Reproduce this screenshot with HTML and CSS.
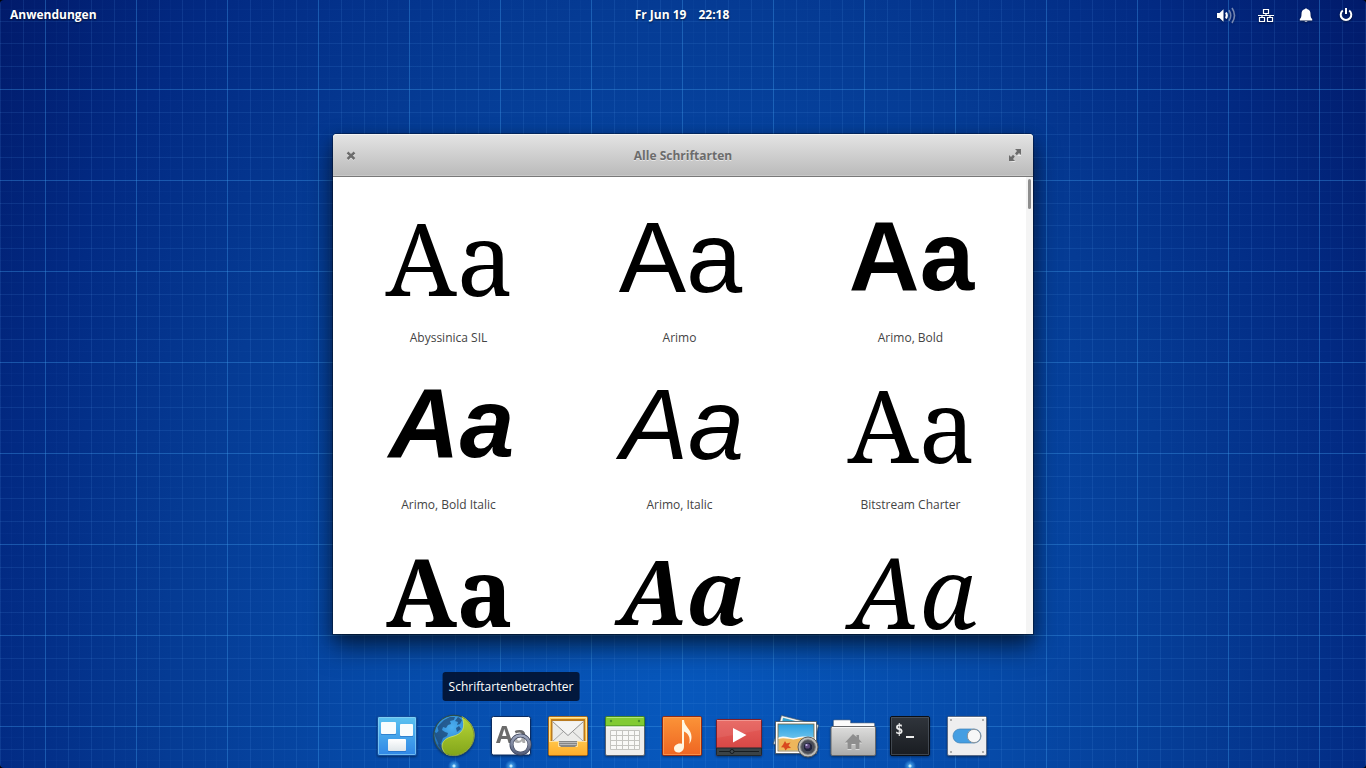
FILE: index.html
```html
<!DOCTYPE html>
<html lang="de">
<head>
<meta charset="utf-8">
<meta name="viewport" content="width=device-width, initial-scale=1">
<title>Alle Schriftarten</title>
<link rel="stylesheet" href="styles.css">
</head>
<body>
<div class="desktop">

  <header class="panel">
    <button class="panel-button apps">Anwendungen</button>
    <button class="panel-button clock"><span>Fr Jun 19</span><span>22:18</span></button>
    <div class="indicators">
      <button class="indicator" aria-label="Lautstärke">
        <svg width="20" height="18" viewBox="0 0 20 18" fill="none" stroke="#fff">
          <path d="M1 7h2.500l4-3.800v12.600L3.500 12H1z" fill="#fff" stroke="none"/>
          <path d="M10 6.500q1.800 3 0 6" stroke-width="2"/>
          <path d="M13 4.200q3.400 5.300 0 10.600M16 2q5 7.500 0 15" stroke-width="1.600" opacity=".45"/>
        </svg>
      </button>
      <button class="indicator" aria-label="Netzwerk">
        <svg width="16" height="16" viewBox="0 0 16 16" fill="none" stroke="#fff">
          <path d="M5.500 2.500h5v4h-5zM1.500 10.500h5v4h-5zM9.500 10.500h5v4h-5zM0 8.500h16M8 6.500v2M4 8.500v2M12 8.500v2" stroke-width="1.200"/>
        </svg>
      </button>
      <button class="indicator" aria-label="Benachrichtigungen">
        <svg width="16" height="16" viewBox="0 0 16 16" fill="#fff">
          <path d="M7 2q1-1.600 2 0c2.600.700 3.500 2.600 3.500 5 0 2.800.500 4.200 1.700 5v1.400H1.800V12c1.200-.800 1.700-2.200 1.700-5C3.500 4.600 4.400 2.700 7 2zM6.300 14h3.400q-1.700 1.600-3.400 0z"/>
        </svg>
      </button>
      <button class="indicator" aria-label="Ausschalten">
        <svg width="16" height="16" viewBox="0 0 16 16" fill="none" stroke="#fff" stroke-width="2">
          <path d="M4.800 3.500a5.300 5.300 0 1 0 6.400 0M8 1v6"/>
        </svg>
      </button>
    </div>
  </header>

  <main class="window">
    <div class="titlebar">
      <button class="title-button" aria-label="Schließen">
        <svg width="10" height="12" viewBox="0 0 10 12" stroke-width="2.400"><path d="M1.500 4.500l7 6M8.500 4.500l-7 6" stroke="#eee"/><path d="M1.500 3.500l7 6.500M8.500 3.500l-7 6.500" stroke="#6c6c6c"/></svg>
      </button>
      <h1 class="title">Alle Schriftarten</h1>
      <button class="title-button" aria-label="Maximieren">
        <svg width="14" height="16" viewBox="0 0 14 16">
          <path d="M1 15h7l-2-1zM9 9l2-1 2 1V8z" fill="#eee"/>
          <path d="M7 2h6v6l-2-2-2.200 2.200-1.800-1.800L9 4zM1 8l2 2 2-2.200 1.800 1.800L5 12l2 2H1z" fill="#6c6c6c"/>
        </svg>
      </button>
    </div>
    <div class="content">
      <ul class="fonts">
        <li class="font"><span class="sample serif">Aa</span><span class="name">Abyssinica SIL</span></li>
        <li class="font"><span class="sample sans">Aa</span><span class="name">Arimo</span></li>
        <li class="font"><span class="sample sans bold">Aa</span><span class="name">Arimo, Bold</span></li>
        <li class="font"><span class="sample sans bold italic">Aa</span><span class="name">Arimo, Bold Italic</span></li>
        <li class="font"><span class="sample sans italic">Aa</span><span class="name">Arimo, Italic</span></li>
        <li class="font"><span class="sample serif">Aa</span><span class="name">Bitstream Charter</span></li>
        <li class="font"><span class="sample serif bold">Aa</span></li>
        <li class="font"><span class="sample serif bold italic">Aa</span></li>
        <li class="font"><span class="sample serif italic">Aa</span></li>
      </ul>
      <div class="scrollbar"><div class="thumb"></div></div>
    </div>
  </main>

  <nav class="dock">
    <button class="launcher" aria-label="Multitasking-Ansicht">
      <svg viewBox="0 0 48 48">
        <defs>
          <linearGradient id="sky" x2="0" y2="1"><stop stop-color="#5cc3f0"/><stop offset="1" stop-color="#2f86e6"/></linearGradient>
          <linearGradient id="white" x2="0" y2="1"><stop stop-color="#fff"/><stop offset="1" stop-color="#dfe6ea"/></linearGradient>
        </defs>
        <rect x="4.500" y="4.500" width="39" height="39" rx="1.500" fill="url(#sky)" stroke="#124c9c"/>
        <rect x="5.500" y="5.500" width="37" height="37" rx="1" fill="none" stroke="#8bd3f6" opacity=".7"/>
        <g fill="#1c62b8" opacity=".5"><rect x="8" y="11" width="15" height="12"/><rect x="27" y="13" width="13" height="12"/><rect x="15" y="28" width="18" height="12"/></g>
        <g fill="#f8fcfd"><rect x="8" y="10" width="15" height="12" rx="1"/><rect x="27" y="12" width="13" height="12" rx="1"/><rect x="15" y="27" width="18" height="12" rx="1" fill="url(#white)"/></g>
      </svg>
    </button>
    <button class="launcher running" aria-label="Webbrowser">
      <svg viewBox="0 0 48 48">
        <defs>
          <radialGradient id="sea" cx=".45" cy=".3" r=".7"><stop stop-color="#4cb0f0"/><stop offset=".6" stop-color="#2d87d3"/><stop offset="1" stop-color="#174a89"/></radialGradient>
          <linearGradient id="leaf" x2="0" y2="1"><stop stop-color="#b8d636"/><stop offset="1" stop-color="#82a51b"/></linearGradient>
        </defs>
        <circle cx="24" cy="23.500" r="20.300" fill="url(#sea)" stroke="#2a4a63" stroke-width="1"/>
        <path d="M10 12l4-4 6-3 5 0-1 3-4 1 1 3-3 1-2 3-3-1-1 3 3 2 3 1-1 3-4 2-2 5-2 2-4-9-.500-4 2 1 2-2-1-4zM28 5l4 3-2 4-3 1 1-3-3-1zM26 16l3-2 2 3-4 3zM9 31l4 3v6l-5-7z" fill="#1b4272" opacity=".72"/>
        <path d="M32 4.800c14 6.600 16.500 24 4.500 34-5.500 4.800-13.500 6-20.500 3.300-7-7-4.500-15 6-17.500 11-2.500 14-9.600 10-19.800z" fill="url(#leaf)" stroke="#d3e560" stroke-width=".8"/>
        <circle cx="24" cy="23.500" r="20" fill="none" stroke="#35521c" stroke-width=".8" opacity=".6"/>
      </svg>
    </button>
    <button class="launcher running" aria-labelledby="tip">
      <svg viewBox="0 0 48 48">
        <defs><linearGradient id="ring" x2="0" y2="1"><stop stop-color="#a3abc0"/><stop offset="1" stop-color="#56607c"/></linearGradient></defs>
        <rect x="4.500" y="4.500" width="39" height="38.500" rx="2" fill="#fff" stroke="#0a2c63"/>
        <text x="9" y="31" class="icon-letters">Aa</text>
        <circle cx="33.500" cy="32.500" r="9" fill="#fff" fill-opacity=".45" stroke="#3d455d" stroke-width="4"/>
        <circle cx="33.500" cy="32.500" r="9" fill="none" stroke="url(#ring)" stroke-width="2.600"/>
        <ellipse cx="33.500" cy="36" rx="6" ry="3.500" fill="#fff" opacity=".6"/>
      </svg>
      <span class="tooltip" id="tip" role="tooltip">Schriftartenbetrachter</span>
    </button>
    <button class="launcher" aria-label="E-Mail">
      <svg viewBox="0 0 48 48">
        <defs>
          <linearGradient id="gold" x2="0" y2="1"><stop stop-color="#ffcd55"/><stop offset="1" stop-color="#f3a41c"/></linearGradient>
          <linearGradient id="tray" x2="0" y2="1"><stop stop-color="#ffc64a"/><stop offset="1" stop-color="#ffad2a"/></linearGradient>
        </defs>
        <rect x="4.500" y="4.500" width="39" height="39" rx="1.500" fill="url(#gold)" stroke="#a7691b"/>
        <path d="M5.500 42V5.500h37V42" fill="none" stroke="#ffe49c"/>
        <rect x="7" y="7" width="34" height="24" fill="#b97a20"/>
        <rect x="8.500" y="9" width="31" height="20" fill="#ebebe9"/>
        <path d="M9 29l11-10M39 29L28 19" stroke="#a9aaaa" fill="none"/>
        <path d="M8.500 9.500L24 23.500l15.500-14" fill="#f4f4f3" stroke="#929292"/>
        <path d="M5 29h10v5h18v-5h10v14H5z" fill="url(#tray)"/>
        <path d="M5 29.500h9.500v5h19v-5H43" fill="none" stroke="#ffe1a0"/>
        <path d="M15 29h18v4l-2 2H17l-2-2z" fill="#858686"/><path d="M15 30.500h18M15.500 32.500h17" stroke="#b9b9b9"/>
      </svg>
    </button>
    <button class="launcher" aria-label="Kalender">
      <svg viewBox="0 0 48 48">
        <rect x="4.500" y="4.500" width="39" height="39" rx="1.500" fill="#eeeeec" stroke="#5b6470"/>
        <path d="M4.500 14V6q0-1.500 1.500-1.500h36q1.500 0 1.500 1.500v8z" fill="#82cb33" stroke="#3f8522"/>
        <path d="M5.500 5.500h37" stroke="#b0e578"/><path d="M5 15h38" stroke="#fff"/>
        <circle cx="10" cy="9" r="1.200" fill="#4d932a"/><circle cx="38" cy="9" r="1.200" fill="#4d932a"/>
        <path d="M9.500 18.500h29v19h-29zM15.500 18.500v19M21.500 18.500v19M27.500 18.500v19M33.500 18.500v19M9.500 23.500h29M9.500 28.500h29M9.500 33.500h29" fill="#f9f9f7" stroke="#c4c4c0"/>
      </svg>
    </button>
    <button class="launcher" aria-label="Musik">
      <svg viewBox="0 0 48 48">
        <defs><linearGradient id="orange" x2="0" y2="1"><stop stop-color="#fb9438"/><stop offset="1" stop-color="#ef6522"/></linearGradient></defs>
        <rect x="4.500" y="4.500" width="39" height="39" rx="1.500" fill="url(#orange)" stroke="#952c13"/>
        <rect x="5.500" y="5.500" width="37" height="37" fill="none" stroke="#ffab62" opacity=".6"/>
        <path d="M24 8h2c.500 7 7.500 9 7.500 17 0 3-.800 5-2.300 7 1.600-7-1-10.500-5.200-12.500v15c0 3.500-2.500 6-5.500 6-2.600 0-4.500-1.500-4.500-4 0-3.300 4-6 8-4.700z" fill="#fff6e2"/>
      </svg>
    </button>
    <button class="launcher" aria-label="Videos">
      <svg viewBox="0 0 48 48">
        <defs><linearGradient id="red" x2="0" y2="1"><stop stop-color="#e8625d"/><stop offset="1" stop-color="#d3403f"/></linearGradient></defs>
        <rect x="1.500" y="7.500" width="45" height="36" rx="1" fill="url(#red)" stroke="#7f1f29"/>
        <path d="M2 8.500h44" stroke="#f28f88"/><path d="M2 8v18l44-8V8z" fill="#fff" opacity=".07"/>
        <path d="M1.500 36h45v6.500q0 1-1 1h-43q-1 0-1-1z" fill="#3b4347" stroke="#20272c"/>
        <path d="M4 39.500h40" stroke="#181e22"/><circle cx="17" cy="39.500" r="2" fill="#434c51" stroke="#161b1f"/>
        <path d="M18 16l13.500 7L18 30.500z" fill="#fff"/>
      </svg>
    </button>
    <button class="launcher" aria-label="Fotos">
      <svg viewBox="0 0 48 48">
        <defs><linearGradient id="beach" x2="0" y2="1"><stop stop-color="#2a9fe0"/><stop offset="1" stop-color="#a4e1f7"/></linearGradient></defs>
        <path d="M9.500 3.500l37 9.500-6 24-39-5z" fill="#f3f3f3" stroke="#50606c" stroke-width=".7"/>
        <path d="M11 5.800l23 6-25 4z" fill="#35a2cd"/>
        <rect x="3.500" y="9.500" width="41" height="32" fill="#fff" stroke="#49555f" stroke-width=".8"/>
        <rect x="6" y="12" width="36" height="27" fill="url(#beach)" stroke="#826738" stroke-width=".8"/>
        <path d="M6.500 26c8-3 11 2 18 0 6-1.800 11-1 17-.500v13h-35z" fill="#eeb65b"/>
        <path d="M6.500 25.500c8-3 11 2 18 0 6-1.800 11-1 17-.500v1.500c-8-1-12-1-17 .500-6 1.500-11-2-18 0z" fill="#fff" opacity=".9"/>
        <path d="M13 29l1.500 2.500 4-1-2 3 2.500 2.500-3.500.200-2 2.300-1.500-3-3-.200 2-2.500z" fill="#d9481e"/>
        <circle cx="36" cy="35" r="10" fill="#bdbdba" stroke="#5c5c5c"/>
        <circle cx="36" cy="35" r="7.300" fill="#4b4d55" stroke="#77787b"/>
        <circle cx="36" cy="35" r="4.800" fill="#20233a" stroke="#4f5362"/>
        <circle cx="35.500" cy="34" r="2.600" fill="#5d4a7c"/><circle cx="34.500" cy="33" r="1.100" fill="#c5bcec"/>
      </svg>
    </button>
    <button class="launcher" aria-label="Dateien">
      <svg viewBox="0 0 48 48">
        <defs><linearGradient id="silver" x2="0" y2="1"><stop stop-color="#dededd"/><stop offset="1" stop-color="#ababaa"/></linearGradient></defs>
        <path d="M4.500 20V9q0-1 1-1h15q1 0 1 1v2h23q1 0 1 1v8z" fill="#fbfbfb" stroke="#6f7d90" stroke-width=".6"/>
        <rect x="2" y="14.500" width="44.500" height="29" rx="1.500" fill="url(#silver)" stroke="#66686b"/>
        <path d="M3 15.500h42.500" stroke="#f6f6f6"/>
        <path d="M24 23l-8 8.500h2.500V38h4v-5h4v5h4v-6.500H33l-3-3.200V24h-2.500v2z" fill="#fff" opacity=".5"/>
        <path d="M24 22l-8 8.500h2.500V37h4v-5h4v5h4v-6.500H33l-3-3.200V23h-2.500v2z" fill="#8e8e8e"/>
      </svg>
    </button>
    <button class="launcher running" aria-label="Terminal">
      <svg viewBox="0 0 48 48">
        <defs><linearGradient id="coal" x2="0" y2="1"><stop stop-color="#30353c"/><stop offset="1" stop-color="#191c21"/></linearGradient></defs>
        <rect x="4.500" y="4.500" width="39" height="39" rx="1.500" fill="url(#coal)" stroke="#0b0e13"/>
        <rect x="5.500" y="5.500" width="37" height="37" fill="none" stroke="#59616a" opacity=".6"/>
        <text x="9" y="22" class="icon-prompt">$</text>
        <path d="M20 25h8" stroke="#eee" stroke-width="2"/>
      </svg>
    </button>
    <button class="launcher" aria-label="Systemeinstellungen">
      <svg viewBox="0 0 48 48">
        <rect x="4.500" y="4.500" width="39" height="39" rx="1.500" fill="#eeeeef" stroke="#596a86"/>
        <path d="M5 5.500h38" stroke="#fff"/>
        <g fill="#969696"><circle cx="8" cy="8" r="1"/><circle cx="40" cy="8" r="1"/><circle cx="8" cy="40" r="1"/><circle cx="40" cy="40" r="1"/></g>
        <rect x="10" y="17" width="28" height="14" rx="7" fill="#459ee2" stroke="#3c7eb4" stroke-width=".7"/>
        <circle cx="31" cy="24" r="6.700" fill="#f7f7f7" stroke="#8a939b"/>
      </svg>
    </button>
  </nav>
</div>
</body>
</html>
```

FILE: styles.css
```css
* {
  box-sizing: border-box;
}

html {
  background: #000;
}

body {
  margin: 0;
  font-family: "Open Sans", "Noto Sans", sans-serif;
  font-size: 12px;
}

button {
  margin: 0;
  padding: 0;
  border: 0;
  background: none;
  font: inherit;
  color: inherit;
}

svg {
  display: block;
}

/* Blueprint wallpaper: strong lines every 91px, weaker ones in between */
.desktop {
  --line: rgba(60, 150, 230, 0.4);
  --mid: rgba(80, 150, 230, 0.15);
  --fine: rgba(80, 150, 230, 0.04);
  display: grid;
  min-height: 100vh;
  border-radius: 4px;
  overflow: hidden;
  background:
    linear-gradient(90deg,
      var(--line) 1px, transparent 1px 11px, var(--fine) 11px 12px, transparent 12px 23px,
      var(--mid) 23px 24px, transparent 24px 34px, var(--fine) 34px 35px, transparent 35px 46px,
      var(--mid) 46px 47px, transparent 47px 57px, var(--fine) 57px 58px, transparent 58px 69px,
      var(--mid) 69px 70px, transparent 70px 80px, var(--fine) 80px 81px, transparent 81px) 45px 0 / 91px 91px,
    linear-gradient(
      var(--line) 1px, transparent 1px 11px, var(--fine) 11px 12px, transparent 12px 23px,
      var(--mid) 23px 24px, transparent 24px 34px, var(--fine) 34px 35px, transparent 35px 45px,
      var(--mid) 45px 46px, transparent 46px 57px, var(--fine) 57px 58px, transparent 58px 68px,
      var(--mid) 68px 69px, transparent 69px 80px, var(--fine) 80px 81px, transparent 81px) 0 89px / 91px 91px,
    radial-gradient(ellipse 60% 150% at 50% 95%, #0758bd 0%, #064aa8 38%, #053b94 63%, #022a83 85%, #011a6a 105%);
}

.panel,
.window,
.dock {
  grid-area: 1 / 1;
}

.panel {
  align-self: start;
  display: grid;
  grid-template-columns: 1fr auto 1fr;
  height: 30px;
  color: #fff;
  font-weight: 700;
}

.panel-button {
  padding-bottom: 2px;
  text-shadow: 0 1px 2px rgba(0, 0, 0, 0.6);
}

.apps {
  justify-self: start;
  padding-left: 10px;
}

.clock {
  display: flex;
  align-items: center;
  gap: 12px;
  padding-right: 2px;
}

.indicators {
  display: flex;
  justify-content: flex-end;
}

.indicator {
  display: grid;
  place-items: center;
  width: 40px;
  filter: drop-shadow(0 1px 1px rgba(0, 0, 0, 0.5));
}

.window {
  place-self: center;
  display: flex;
  flex-direction: column;
  width: min(700px, 100%);
  height: 500px;
  border-radius: 4px 4px 0 0;
  background: #fff;
  box-shadow:
    0 0 0 1px rgba(0, 0, 0, 0.3),
    0 14px 26px rgba(0, 0, 0, 0.5),
    0 4px 14px rgba(0, 0, 0, 0.3);
}

.titlebar {
  display: flex;
  align-items: center;
  justify-content: space-between;
  flex: none;
  height: 43px;
  padding: 0 11px 0 13px;
  border-bottom: 1px solid #787878;
  border-radius: 4px 4px 0 0;
  background: linear-gradient(#e4e4e4, #bababa);
  box-shadow: inset 0 1px #f4f4f4, inset 0 -1px #c8c8c8;
}

.title {
  margin: 0;
  padding-left: 2px;
  color: #6c6c6c;
  font-size: 12px;
  font-weight: 700;
  text-shadow: 0 1px #e6e6e6;
}

.content {
  display: flex;
  flex: 1;
  min-height: 0;
  overflow: hidden;
}

.fonts {
  display: grid;
  grid-template-columns: repeat(3, 1fr);
  grid-auto-rows: 167px;
  flex: 1;
  margin: 0;
  padding: 34px 0 0;
  list-style: none;
  text-align: center;
}

.font {
  display: flex;
  flex-direction: column;
}

.sample {
  height: 119px;
  padding-left: 2px;
  color: #000;
  line-height: 92px;
}

.sans {
  font-family: "Liberation Sans", Arial, sans-serif;
  font-size: 101px;
}

.sans.bold {
  font-size: 98px;
  line-height: 90px;
}

.serif {
  font-family: "Noto Serif", "DejaVu Serif", serif;
  font-size: 101px;
}

.serif.bold {
  font-size: 94px;
}

.serif.italic {
  font-size: 98px;
}

.serif.bold.italic {
  font-size: 90px;
  line-height: 90px;
}

.bold {
  font-weight: 700;
}

.italic {
  padding-left: 6px;
  font-style: italic;
}

.name {
  color: #444;
  line-height: 16px;
}

.scrollbar {
  width: 7px;
  padding: 2px;
  background: #f4f4f4;
}

.thumb {
  height: 30px;
  border-radius: 2px;
  background: #8e8e8e;
}

.dock {
  place-self: end center;
  display: flex;
  gap: 9px;
  padding-right: 2px;
}

.launcher {
  position: relative;
  width: 48px;
  padding-bottom: 8px;
}

.launcher svg {
  width: 48px;
  height: 48px;
  filter: drop-shadow(0 1px 1px rgba(0, 0, 0, 0.4));
}

.running::after {
  content: "";
  position: absolute;
  bottom: -6px;
  left: 50%;
  width: 16px;
  height: 16px;
  margin-left: -8px;
  background: radial-gradient(circle, #b8e8ff 1px, rgba(90, 190, 255, 0.6) 2px, rgba(60, 160, 255, 0) 6px);
}

.tooltip {
  position: absolute;
  bottom: calc(100% + 11px);
  left: 50%;
  padding: 6px;
  border-radius: 3px;
  background: rgba(2, 18, 48, 0.9);
  color: #fff;
  line-height: 17px;
  white-space: nowrap;
  transform: translateX(-50%);
}

.icon-letters {
  fill: #6b6b6b;
  font: 700 24px "Open Sans", sans-serif;
}

.icon-prompt {
  fill: #eee;
  font: 700 14px "DejaVu Sans Mono", monospace;
}
```
